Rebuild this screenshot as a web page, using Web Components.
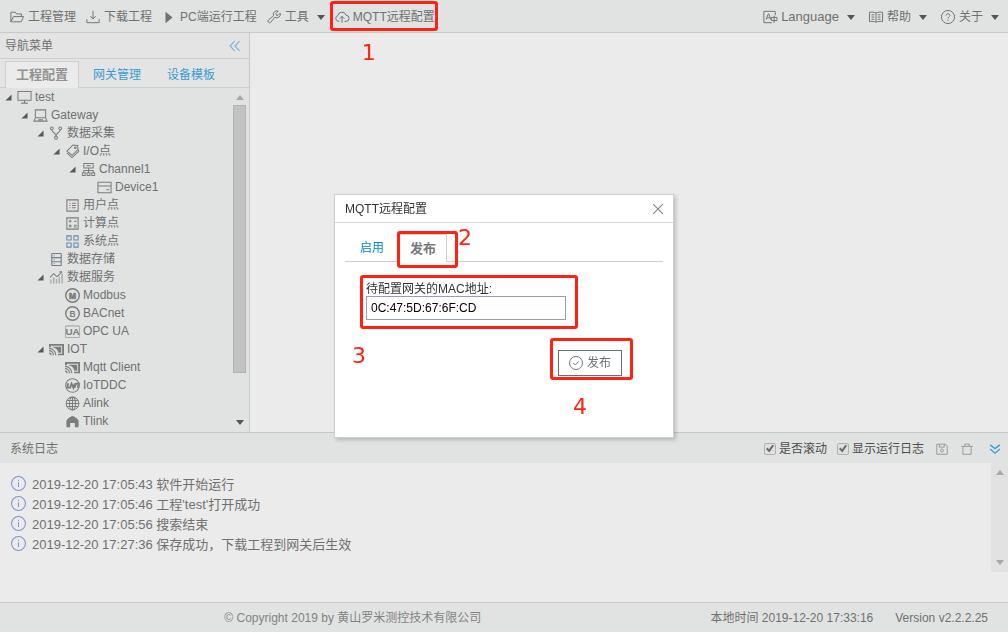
<!DOCTYPE html>
<html lang="zh-CN">
<head>
<meta charset="utf-8">
<title>MQTT远程配置</title>
<style>
html, body { margin: 0; height: 100%; }
body { font: 12px/18px "Liberation Sans", "Noto Sans CJK SC", sans-serif; color: #707070; background: #ebebeb; }
</style>
</head>
<body>
<gateway-app></gateway-app>
<script>
const define = (name, html, setup) => {
  const template = document.createElement('template');
  template.innerHTML = '<style>*{box-sizing:border-box}button{font:inherit;color:inherit;background:none;border:0;padding:0;margin:0}</style>' + html;
  customElements.define(name, class extends HTMLElement {
    constructor() {
      super();
      this.attachShadow({ mode: 'open' }).append(template.content.cloneNode(true));
    }
    connectedCallback() { if (setup) setup(this, this.shadowRoot); }
  });
};

const T = (x, y, size, text, extra = '') => `<text x="${x}" y="${y}" font-size="${size}" font-weight="bold" text-anchor="middle" fill="currentColor" stroke="none" ${extra}>${text}</text>`;
const cast = '<path fill="currentColor" stroke="none" d="M0 2h16v12H9.600v-1.500H14V4H2v1.600H0z"/><path fill="currentColor" stroke="none" d="M4 5h9v6.500H10C9.500 8.500 7.500 6 4 5.500z"/><path stroke-width="1.300" d="M0 6.800c4 0 7.300 3.200 7.300 7.200M0 9.300c2.600 0 4.700 2.100 4.700 4.700M0 11.800c1.200 0 2.200 1 2.200 2.200"/>';
const ICONS = {
  folder: '<path d="M1 13.500V2.500h5l1.500 2H13v3M1 13.500l3-6h11.500l-2.700 6z"/>',
  download: '<path d="M8 1v9M5 7l3 3.300L11 7M1 10.500v4h14v-4"/>',
  play: '<path fill="currentColor" stroke="none" d="M4 2 12 8.500 4 15z"/>',
  wrench: '<path d="M9 8.200 4.200 14a1.700 1.700 0 0 1-2.600-2.600L7.500 6.600A4 4 0 0 1 12.800 1.300L10.300 4l.3 1.900 2 .3 2.500-2.500A4 4 0 0 1 9 8.200z"/>',
  cloud: '<path d="M5 13H4A3.500 3.500 0 0 1 3.300 6.200 4.800 4.800 0 0 1 12.600 6a3.500 3.500 0 0 1 0 7H11M8 14.500V7.500M5.500 9.800 8 7.200l2.500 2.600"/>',
  language: '<path d="M14 6V1.500H1v13h9M3.500 11 6 4.500h.6L9 11M4.500 9h3.500M9.500 8.500H16v3.500H9.500zM12.700 6.800v8"/>',
  book: '<path d="M8 3.200v10.500M8 3.500C6 2.300 3 2.300.5 2.600v10.600c2.500-.3 5.500-.3 7.500.8 2-1.100 5-1.100 7.500-.8V2.600C13 2.300 10 2.300 8 3.500zM2.800 5.500h3.200M2.800 8h3.200M2.800 10.500h3.200M10 5.500h3.200M10 8h3.200M10 10.500h3.200"/>',
  help: '<circle cx="8" cy="8" r="7.500"/><path d="M5.900 6.300c0-2.800 4.300-2.700 4.200 0C10 8 8 8 8 9.800M8 11v1.300"/>',
  monitor: '<path d="M1 1.500h14v9.500H1zM8 11v3M4.500 14h7"/>',
  laptop: '<path d="M2.500 2h11v8.500H2.500zM2.500 10.500 1 14h14l-1.500-3.500M5.500 12.500h5"/>',
  branch: '<circle cx="3" cy="2.500" r="1.500"/><circle cx="12" cy="2.500" r="1.500"/><circle cx="7.500" cy="12.500" r="1.500"/><path d="M3 4c0 3.500 4.500 2.500 4.500 7M12 4c0 3.500-4.500 2.500-4.500 7"/>',
  tag: '<path d="M2 7.500 8.500 1l5 .5.300 4.500L7.500 12z"/><path d="m2 9.500 5.500 5 7-6.500V6"/><circle cx="11" cy="4" r=".9"/>',
  channel: '<path d="M3 1.500h10v5H3zM5.500 4h5M8 6.500v5M3 11.500v-2.500h10v2.500M1.500 11.500h3v3h-3zM6.500 11.500h3v3h-3zM11.500 11.500h3v3h-3z"/>',
  device: '<path d="M1 2.500h14v11H1zM1 6.500h14M10 10.500h3"/>',
  list: '<path d="M2 2h12v12H2z"/><path stroke="#b68e68" d="M4.500 5.500H6M4.500 8H6M4.500 10.500H6"/><path d="M7.500 5.500h4M7.500 8h4M7.500 10.500h4"/>',
  calc: '<path d="M2 2h12v12H2zM4 5.500h3M5.500 4v3M9.500 5.500h3M4.300 9.500l2.500 2.500M6.800 9.500 4.300 12M9.500 9.800h3M9.500 11.800h3"/>',
  grid: '<path stroke="#688ba5" d="M2 2h4.500v4.500H2zM9.500 2H14v4.500H9.500zM2 9.500h4.500V14H2zM9.500 9.500H14V14H9.500z"/>',
  store: '<path stroke="#587a9c" d="M3 1.500v13M13 1.500v13"/><path d="M3 1.500h10M3 6h10M3 10.500h10M3 14.500h10M5 4h1M5 8.300h1M5 12.500h1"/>',
  chart: '<path stroke-width="1.500" d="M2 14.500V10M5 14.500V8M8 14.500v-5M11 14.500V7M14 14.500V4" opacity=".55"/><path d="m1 8 4-4 3.500 3 5-4.500M11 2h3"/>',
  modbus: '<circle cx="8" cy="8" r="7.200" stroke-width="1.500"/>' + T(8, 11.3, 9, 'M', 'style="stroke:currentColor;stroke-width:.7"'),
  bacnet: '<circle cx="8" cy="8" r="7.200" stroke-width="1.500"/>' + T(8, 11.3, 9, 'B'),
  ua: '<rect x=".5" y="2" width="15" height="12.500" rx="1.500" opacity=".55"/>' + T(8, 12, 10.5, 'UA'),
  cast,
  iot: '<circle cx="8" cy="8" r="7.300"/><path stroke-width="2" d="M3.500 5.500 2.200 10.300H5.500L7 6l2 4.300L10.500 6M10 10.500 11.500 6h3l-1 4.500"/>',
  globe: '<circle cx="8" cy="8" r="6.800"/><ellipse cx="8" cy="8" rx="3.200" ry="6.800"/><path d="M1.200 8h13.600M8 1v14M2.200 4.700h11.600M2.200 11.300h11.600"/>',
  home: '<path fill="currentColor" stroke="none" d="M1.500 14V7L3.500 4.500 6 3l2-1 2 1 2.500 1.500 2 2.500v7H10.500V9.500h-5V14z"/>',
  info: '<circle cx="8" cy="8" r="7.400"/><path d="M8 6.700v5M8 4v1.300"/>',
  save: '<path d="M1 1.500h11.500L15 4v11H1zM4.500 1.500V5.500h6.500v-4"/><circle cx="8" cy="10" r="2"/>',
  trash: '<path d="M.5 4.500h15M5 4.300V1.500h6v2.800M2.500 4.500V15h11V4.500"/>',
  left: '<path stroke-width="1.600" d="M7.500 1.500 1.500 8l6 6.500M14 1.500 8 8l6 6.500"/>',
  down: '<path stroke-width="1.700" d="M1.500 2.500 8 7.500l6.500-5M1.500 8 8 13.500 14.500 8"/>',
  close: '<path stroke-width="1.300" d="m2.500 2.500 11 11M13.500 2.500l-11 11"/>',
  check: '<circle cx="8" cy="8" r="7.400"/><path d="m5 8 2.200 2.300L11.200 6"/>',
  expand: '<path fill="currentColor" stroke="none" d="M15 1v14H1z"/>'
};
define('ui-icon', `<style>:host{display:block;flex:none;width:14px;height:14px}svg{display:block;width:100%;height:100%;overflow:visible;font-family:"Liberation Sans",sans-serif}</style>
<svg viewBox="0 0 16 16" fill="none" stroke="currentColor" stroke-width="1.1" aria-hidden="true"></svg>`,
  (el, root) => { root.querySelector('svg').innerHTML = ICONS[el.getAttribute('name')]; });

define('ui-caret', `<style>:host{display:block;flex:none;width:0;height:0;border:4px solid transparent;border-top:5px solid #555;border-bottom:0}:host([up]){border-top:0;border-bottom:5px solid #a8a8a8}:host([faint]){border-top-color:#a8a8a8}</style>`);

/* Red call-out frame around a control, with its step number beside it. */
define('step-mark', `<style>
:host{position:absolute;z-index:5;inset:var(--inset);border:3px solid #ff2213;border-radius:3px;pointer-events:none}
span{position:absolute;left:var(--x);top:var(--y);font:22px/22px "DejaVu Sans",sans-serif;color:#ff2213}
</style><span><slot></slot></span>`);

define('tool-item', `<style>
:host{display:block;position:relative}
button{display:flex;align-items:center;gap:4px;height:32px;padding-top:2px;white-space:nowrap}
ui-caret{margin-left:4px}
:host(:not([menu])) ui-caret{display:none}
</style><button type="button"><ui-icon></ui-icon><span><slot></slot></span><ui-caret></ui-caret></button><slot name="mark"></slot>`,
  (el, root) => {
    const icon = document.createElement('ui-icon');
    icon.setAttribute('name', el.getAttribute('icon'));
    root.querySelector('ui-icon').replaceWith(icon);
  });

define('app-toolbar', `<style>
:host{display:block;background:#e1e3e2;border-bottom:1px solid #c8caca}
nav{display:flex;justify-content:space-between;padding:0 9px 0 10px}
div{display:flex;gap:10px}
.right{gap:14px}
.lang{font-size:13px}
step-mark{--inset:1px -3px 1px -5px;--x:29px;--y:38px}
</style><nav><div>
<tool-item icon="folder">工程管理</tool-item><tool-item icon="download">下载工程</tool-item><tool-item icon="play">PC端运行工程</tool-item><tool-item icon="wrench" menu>工具</tool-item><tool-item icon="cloud">MQTT远程配置<step-mark slot="mark">1</step-mark></tool-item>
</div><div class="right">
<tool-item class="lang" icon="language" menu>Language</tool-item><tool-item icon="book" menu>帮助</tool-item><tool-item icon="help" menu>关于</tool-item>
</div></nav>`);

define('tree-row', `<style>
:host{display:flex;align-items:center;height:18px;white-space:nowrap;padding-left:calc(var(--level) * 16px)}
.arrow{flex:none;width:16px;display:grid;place-items:center}
.arrow ui-icon{width:7px;height:7px;color:#5a5a5a}
.pic{flex:none;width:19px;display:flex;padding-left:1px;color:#7c7c7c}
.pic ui-icon{width:15px;height:15px}
:host(:not([open])) .arrow ui-icon{display:none}
</style><span class="arrow"><ui-icon name="expand"></ui-icon></span><span class="pic"></span><slot></slot>`,
  (el, root) => {
    el.setAttribute('role', 'treeitem');
    el.style.setProperty('--level', el.getAttribute('level'));
    root.querySelector('.pic').innerHTML = `<ui-icon name="${el.getAttribute('icon')}"></ui-icon>`;
  });

define('scroll-bar', `<style>
:host{display:flex;flex-direction:column;align-items:center;justify-content:space-between}
i{width:13px;flex:0 1 78%;margin:2px 0 auto;background:#c2c2c2;border:1px solid #b3b3b3}
ui-caret{margin:7px 0 3px}ui-caret:last-child{margin:7px 0}
:host([idle]) i{display:none}
</style><ui-caret up></ui-caret><i></i><ui-caret></ui-caret>`,
  (el, root) => { if (el.hasAttribute('idle')) root.querySelector('ui-caret:last-child').setAttribute('faint', ''); });

define('nav-panel', `<style>
:host{display:flex;flex-direction:column;flex:none;width:250px;border-right:1px solid #c8c8c8;background:#e1e3e2;min-height:0}
header{display:flex;flex:none;justify-content:space-between;align-items:center;height:26px;padding:0 8px 0 5px;background:#e4e4e4;border-bottom:1px solid #cfcfcf}
header button{color:#7fb2da}header ui-icon{width:12px;height:12px}
.tabs{display:flex;flex:none;height:29px;padding:2px 0 0 5px;background:#e4e4e4;border-bottom:1px solid #cfcfcf}
.tabs button{padding:0 13px;height:27px;color:#3b9bd0}
.tabs button.on{padding:0 10px;margin-right:1px;border:1px solid #cfcfcf;border-bottom:0;background:#ebebeb;color:#929292;font-weight:bold;font-size:13px}
.body{display:flex;flex:1;min-height:0}
.tree{flex:1;overflow:hidden}
scroll-bar{width:17px;margin-right:1px}
</style>
<header><span>导航菜单</span><button type="button" aria-label="收起"><ui-icon name="left"></ui-icon></button></header>
<div class="tabs"><button type="button" class="on">工程配置</button><button type="button">网关管理</button><button type="button">设备模板</button></div>
<div class="body"><div class="tree" role="tree">
<tree-row level="0" icon="monitor" open>test</tree-row>
<tree-row level="1" icon="laptop" open>Gateway</tree-row>
<tree-row level="2" icon="branch" open>数据采集</tree-row>
<tree-row level="3" icon="tag" open>I/O点</tree-row>
<tree-row level="4" icon="channel" open>Channel1</tree-row>
<tree-row level="5" icon="device">Device1</tree-row>
<tree-row level="3" icon="list">用户点</tree-row>
<tree-row level="3" icon="calc">计算点</tree-row>
<tree-row level="3" icon="grid">系统点</tree-row>
<tree-row level="2" icon="store">数据存储</tree-row>
<tree-row level="2" icon="chart" open>数据服务</tree-row>
<tree-row level="3" icon="modbus">Modbus</tree-row>
<tree-row level="3" icon="bacnet">BACnet</tree-row>
<tree-row level="3" icon="ua">OPC UA</tree-row>
<tree-row level="2" icon="cast" open>IOT</tree-row>
<tree-row level="3" icon="cast">Mqtt Client</tree-row>
<tree-row level="3" icon="iot">IoTDDC</tree-row>
<tree-row level="3" icon="globe">Alink</tree-row>
<tree-row level="3" icon="home">Tlink</tree-row>
</div><scroll-bar></scroll-bar></div>`);

define('log-row', `<style>
:host{display:flex;align-items:center;gap:6px;height:20px;font-size:13px}
ui-icon{width:15px;height:15px;color:#7f93cc;margin-bottom:4px}
</style><ui-icon name="info"></ui-icon><span><slot></slot></span>`);

define('log-panel', `<style>
:host{display:block;flex:none;border-top:1px solid #c6c8c8}
header{display:flex;align-items:center;height:30px;padding:1px 7px 0 10px;background:#e1e3e2}
.title{flex:1}
label{display:flex;align-items:center;gap:3px;margin-right:10px;color:#4d4d4d}
label.last{margin-right:12px}
input{appearance:none;display:grid;place-items:center;width:12px;height:12px;margin:0;border:1px solid #b0b0b0;border-radius:2px;background:#e0e0e0}
input:checked::before{content:"";width:8px;height:8px;background:#6c6c6c;clip-path:polygon(0 55%,18% 38%,38% 58%,82% 0,100% 15%,42% 100%)}
.tools{display:flex;gap:13px;color:#8c8c8c}
.tools ui-icon{width:12px;height:12px}
.tools .fold{color:#3b9bd6;margin-left:3px}
.body{display:flex;justify-content:space-between;height:139px}
.rows{padding:12px 11px}
scroll-bar{width:17px;height:109px;background:#e2e2e2}
</style>
<header><span class="title">系统日志</span>
<label><input type="checkbox" checked>是否滚动</label><label class="last"><input type="checkbox" checked>显示运行日志</label>
<span class="tools"><button type="button" aria-label="保存"><ui-icon name="save"></ui-icon></button><button type="button" aria-label="清空"><ui-icon name="trash"></ui-icon></button><button class="fold" type="button" aria-label="收起"><ui-icon name="down"></ui-icon></button></span></header>
<div class="body"><div class="rows">
<log-row>2019-12-20 17:05:43 软件开始运行</log-row>
<log-row>2019-12-20 17:05:46 工程'test'打开成功</log-row>
<log-row>2019-12-20 17:05:56 搜索结束</log-row>
<log-row>2019-12-20 17:27:36 保存成功，下载工程到网关后生效</log-row>
</div><scroll-bar idle></scroll-bar></div>`);

define('app-footer', `<style>
:host{display:grid;grid-template-columns:7fr 3fr;align-items:center;flex:none;height:30px;border-top:1px solid #c8caca;background:#e1e3e2}
.copy{text-align:center;color:#828282}
.info{display:flex;justify-content:flex-end;gap:22px;padding-right:20px;white-space:nowrap}
</style><span class="copy">© Copyright 2019 by 黄山罗米测控技术有限公司</span><span class="info"><span>本地时间 2019-12-20 17:33:16</span><span>Version v2.2.2.25</span></span>`);

define('config-dialog', `<style>
:host{position:fixed;inset:0;z-index:3;display:grid;place-items:center}
section{width:340px;height:244px;background:#fff;border:1px solid #cfcfcf;box-shadow:2px 2px 4px #0003;color:#333}
header{display:flex;justify-content:space-between;align-items:center;height:28px;padding:0 8px 0 10px;border-bottom:1px solid #d8d8d8}
header button{color:#858585}
.tabs{display:flex;height:28px;margin:11px 10px 0;border-bottom:1px solid #cfcfcf}
.tabs button{height:28px;padding:0 15px;color:#0285cb}
.tabs .on{position:relative;padding:0 10px;border:1px solid #cfcfcf;border-bottom:0;background:#fff;color:#787878;font-weight:bold;font-size:13px}
form{display:flex;flex-direction:column;padding:18px 51px 0 31px}
.field{position:relative;display:grid;width:200px}
label{line-height:14px;padding-top:2px}
input{width:100%;height:24px;padding:0 4px;border:1px solid #95a0b8;font:inherit;color:#000;outline:0}
.submit{position:relative;align-self:flex-end;margin-top:30px}
.submit button{display:flex;align-items:center;justify-content:center;gap:4px;width:64px;height:26px;border:1px solid #667078;color:#6b747b}
.t2{--inset:-4px -12px -6px -3px;--x:58px;--y:-7px}
.t3{--inset:-5px -12px -9px -6px;--x:-11px;--y:67px}
.t4{--inset:-12px -11px -4px -8px;--x:20px;--y:55px}
</style>
<section role="dialog" aria-label="MQTT远程配置">
<header><span>MQTT远程配置</span><button type="button" aria-label="关闭"><ui-icon name="close"></ui-icon></button></header>
<div class="tabs"><button type="button">启用</button><button type="button" class="on">发布<step-mark class="t2">2</step-mark></button></div>
<form><div class="field"><label for="mac">待配置网关的MAC地址:</label><input id="mac" type="text" value="0C:47:5D:67:6F:CD"><step-mark class="t3">3</step-mark></div>
<div class="submit"><button type="button"><ui-icon name="check"></ui-icon>发布</button><step-mark class="t4">4</step-mark></div></form>
</section>`);

define('gateway-app', `<style>
:host{display:flex;flex-direction:column;height:100vh}
main{display:flex;flex:1;min-height:0}
</style><app-toolbar></app-toolbar><main><nav-panel></nav-panel></main><log-panel></log-panel><app-footer></app-footer><config-dialog></config-dialog>`);
</script>
</body>
</html>
